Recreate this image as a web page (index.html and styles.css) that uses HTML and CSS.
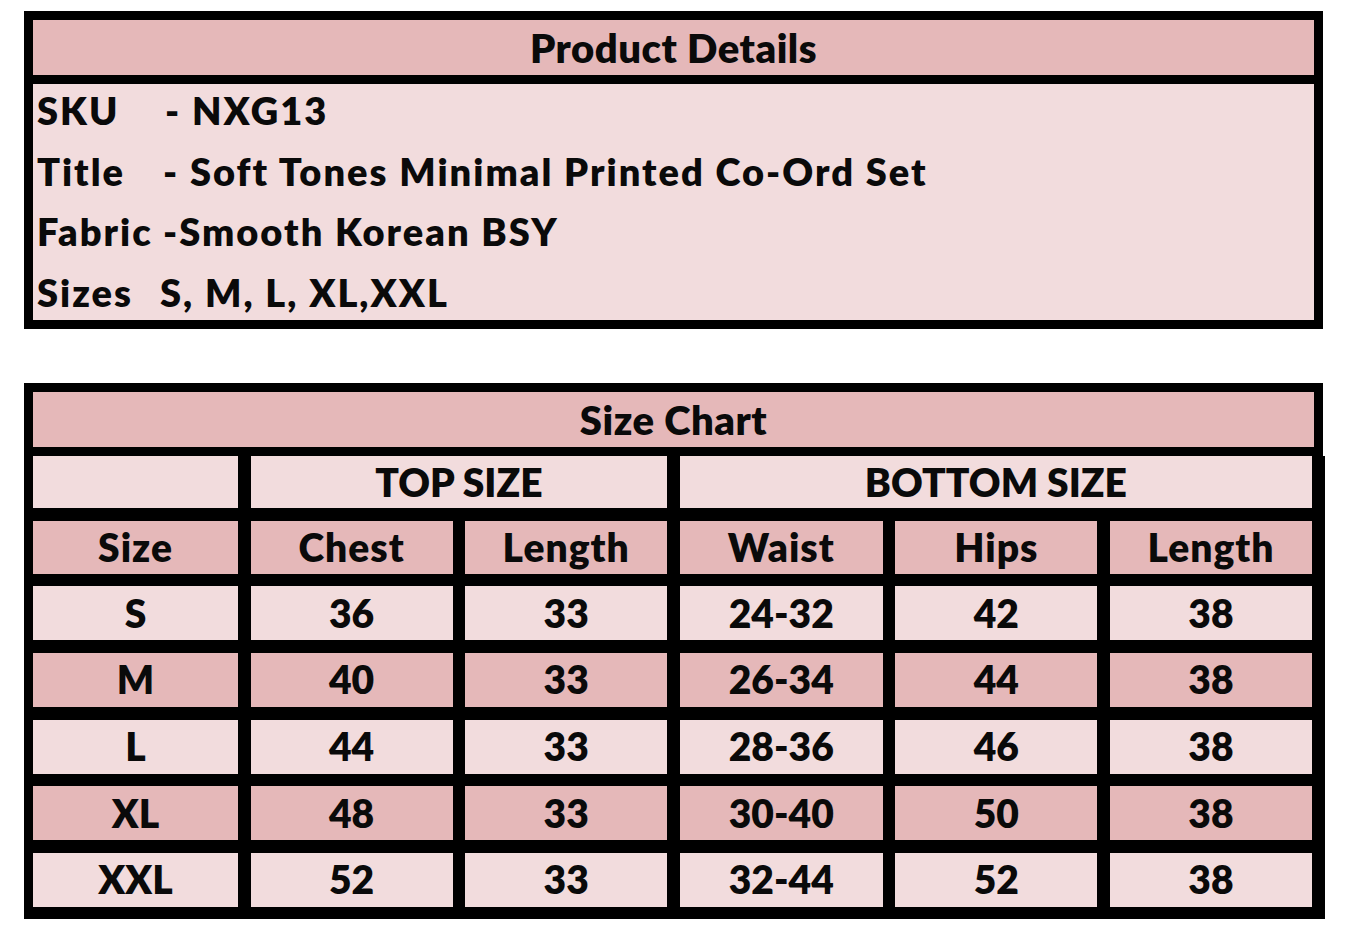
FILE: index.html
```html
<!DOCTYPE html>
<html lang="en">
<head>
<meta charset="utf-8">
<title>Product Details</title>
<link rel="stylesheet" href="styles.css">
</head>
<body>
<div class="page">
  <section class="details">
    <div class="details-head">Product Details</div>
    <div class="details-body">
      <div class="line"><span class="label">SKU</span><span class="value sku">- NXG13</span></div>
      <div class="line"><span class="label">Title</span><span class="value">- Soft Tones Minimal Printed Co-Ord Set</span></div>
      <div class="line"><span class="label">Fabric</span><span class="value">-Smooth Korean BSY</span></div>
      <div class="line"><span class="label">Sizes</span><span class="value sizes">S, M, L, XL,XXL</span></div>
    </div>
  </section>

  <section class="chart">
    <div class="chart-head">Size Chart</div>
    <div class="grid">
      <div class="cell light"></div>
      <div class="cell light span2">TOP SIZE</div>
      <div class="cell light span3">BOTTOM SIZE</div>

      <div class="cell dark colhead">Size</div>
      <div class="cell dark colhead">Chest</div>
      <div class="cell dark colhead">Length</div>
      <div class="cell dark colhead">Waist</div>
      <div class="cell dark colhead">Hips</div>
      <div class="cell dark colhead">Length</div>

      <div class="cell light">S</div>
      <div class="cell light">36</div>
      <div class="cell light">33</div>
      <div class="cell light">24-32</div>
      <div class="cell light">42</div>
      <div class="cell light">38</div>

      <div class="cell dark">M</div>
      <div class="cell dark">40</div>
      <div class="cell dark">33</div>
      <div class="cell dark">26-34</div>
      <div class="cell dark">44</div>
      <div class="cell dark">38</div>

      <div class="cell light">L</div>
      <div class="cell light">44</div>
      <div class="cell light">33</div>
      <div class="cell light">28-36</div>
      <div class="cell light">46</div>
      <div class="cell light">38</div>

      <div class="cell dark">XL</div>
      <div class="cell dark">48</div>
      <div class="cell dark">33</div>
      <div class="cell dark">30-40</div>
      <div class="cell dark">50</div>
      <div class="cell dark">38</div>

      <div class="cell light">XXL</div>
      <div class="cell light">52</div>
      <div class="cell light">33</div>
      <div class="cell light">32-44</div>
      <div class="cell light">52</div>
      <div class="cell light">38</div>
    </div>
  </section>
</div>
</body>
</html>
```

FILE: styles.css
```css
html, body {
  margin: 0;
  padding: 0;
  background: #ffffff;
}

body {
  font-family: Lato, "Open Sans", "Liberation Sans", sans-serif;
  font-weight: 800;
  color: #0a0a0a;
}

.page {
  padding: 11px 0 0 24px;
  display: flex;
  flex-direction: column;
  gap: 54px;
}

/* Product details box */
.details {
  width: 1281px;
  border: 9px solid #000;
  background: #000;
  display: flex;
  flex-direction: column;
  gap: 9px;
}

.details-head,
.chart-head {
  height: 55px;
  background: #e5b8b9;
  display: flex;
  align-items: center;
  justify-content: center;
  font-size: 40px;
  letter-spacing: 0.5px;
  line-height: 1;
}

.details-body {
  height: 236px;
  background: #f2dcdd;
  padding-left: 4px;
  box-sizing: border-box;
  overflow: hidden;
}

.line {
  display: flex;
  height: 60.5px;
  line-height: 52px;
  font-size: 38px;
  letter-spacing: 2px;
  white-space: pre;
}

.label {
  width: 126px;
  flex: none;
}

.sku {
  margin-left: 2px;
}

.sizes {
  margin-left: -3px;
}

/* Size chart */
.chart {
  display: flex;
  flex-direction: column;
  width: 1301px;
}

.chart-head {
  width: 1281px;
  border: 9px solid #000;
}

.grid {
  background: #000;
  padding: 0 13px 12px 9px;
  display: grid;
  grid-template-columns: 205px 202px 202px 203px 202px 202px;
  grid-template-rows: 52px 53px 54px 54px 54px 54px 54px;
  column-gap: 12.6px;
  row-gap: 12.67px;
}

.cell {
  display: flex;
  align-items: center;
  justify-content: center;
  font-size: 39px;
  line-height: 1;
}

.colhead {
  letter-spacing: 1px;
}

.light {
  background: #f2dcdd;
}

.dark {
  background: #e5b8b9;
}

.span2 {
  grid-column: span 2;
}

.span3 {
  grid-column: span 3;
}
```
